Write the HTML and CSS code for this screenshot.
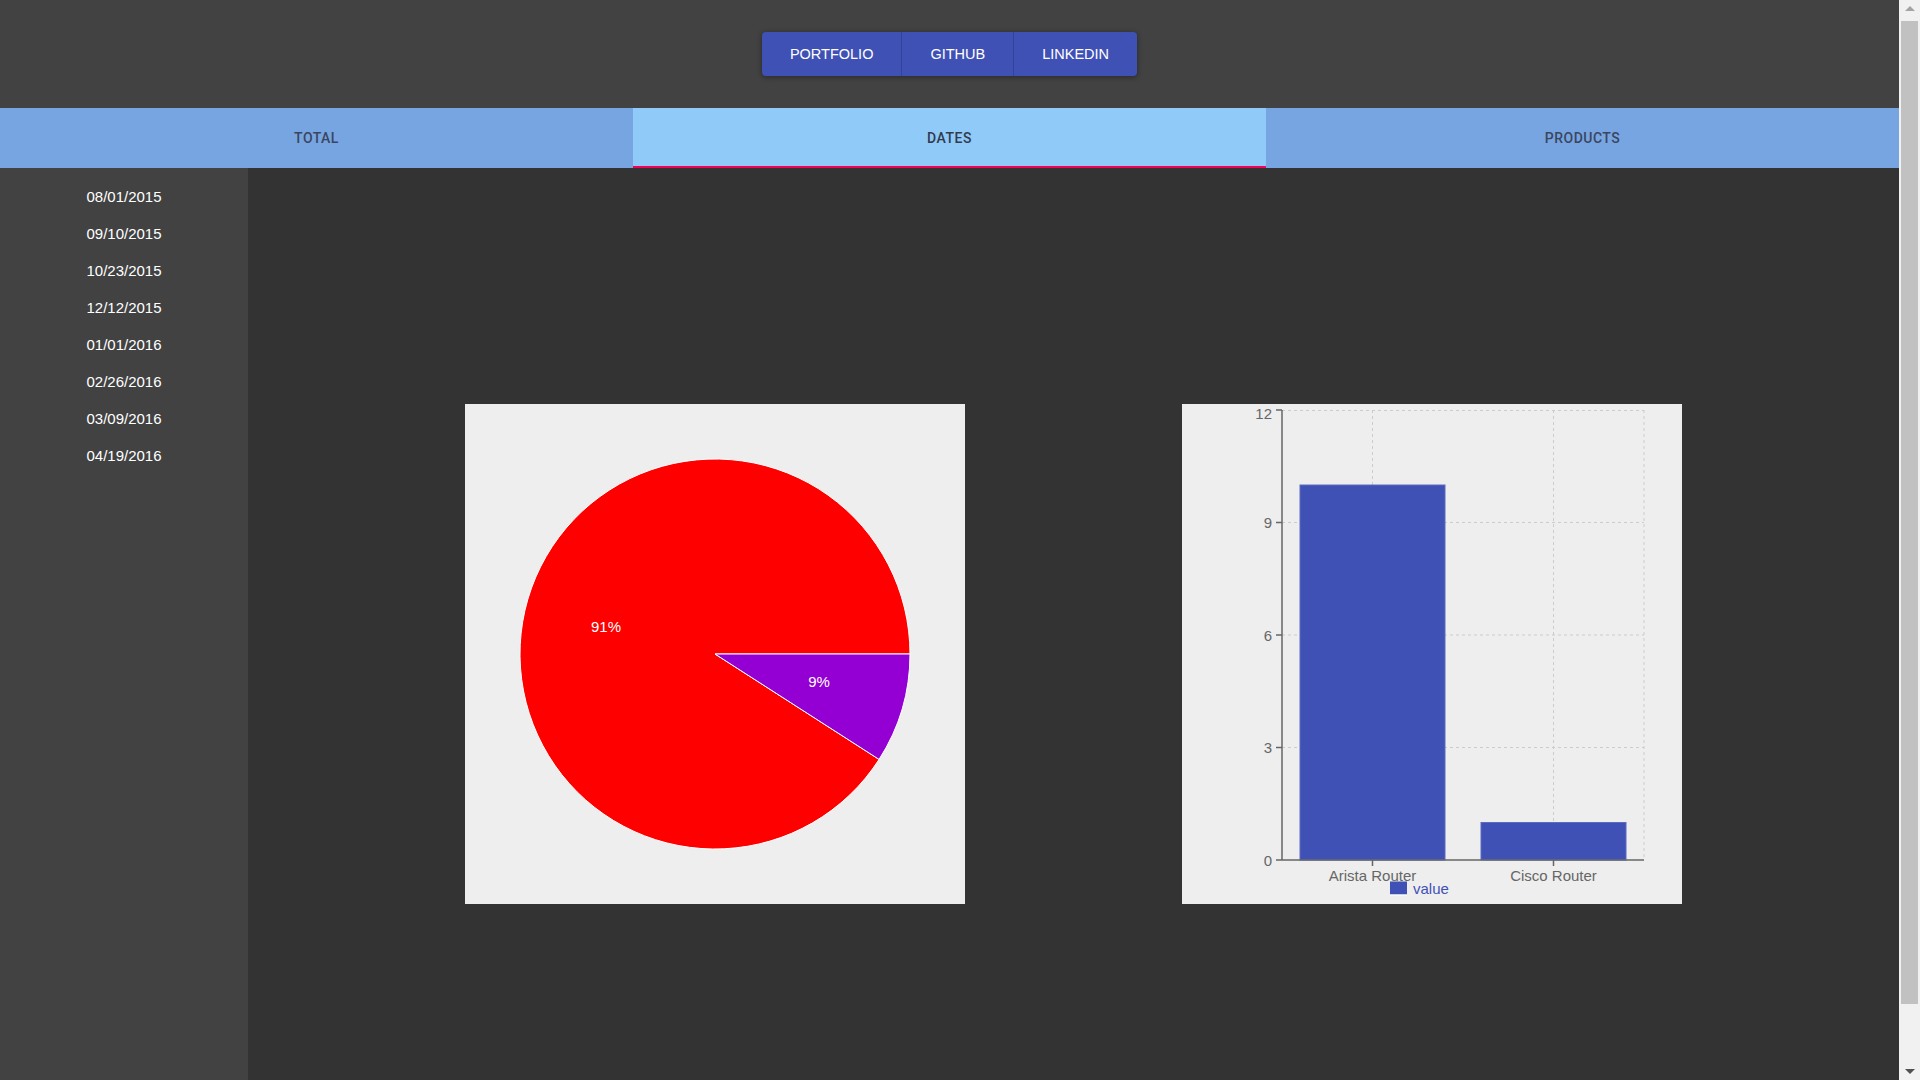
FILE: index.html
```html
<!DOCTYPE html>
<html lang="en">
<head>
<meta charset="utf-8">
<title>Dashboard</title>
<link rel="stylesheet" href="styles.css">
</head>
<body>
<div class="window">
  <div class="app">
    <header class="header">
      <nav class="btn-group">
        <a class="btn">PORTFOLIO</a>
        <a class="btn">GITHUB</a>
        <a class="btn">LINKEDIN</a>
      </nav>
    </header>
    <div class="tabs">
      <div class="tab">TOTAL</div>
      <div class="tab tab-active">DATES</div>
      <div class="tab">PRODUCTS</div>
    </div>
    <div class="content">
      <aside class="sidebar">
        <ul class="dates">
          <li>08/01/2015</li>
          <li>09/10/2015</li>
          <li>10/23/2015</li>
          <li>12/12/2015</li>
          <li>01/01/2016</li>
          <li>02/26/2016</li>
          <li>03/09/2016</li>
          <li>04/19/2016</li>
        </ul>
      </aside>
      <main class="charts">
        <div class="chart-card">
          <svg class="chart" width="500" height="500" viewBox="0 0 500 500">
            <path d="M250,250 L414.05,355.42 A195,195 0 1 1 445,250 Z" fill="#ff0000" stroke="#ffffff" stroke-width="1"/>
            <path d="M250,250 L445,250 A195,195 0 0 1 414.05,355.42 Z" fill="#9400d3" stroke="#ffffff" stroke-width="1"/>
            <text class="pie-label" x="141" y="222.5">91%</text>
            <text class="pie-label" x="354" y="277.5">9%</text>
          </svg>
        </div>
        <div class="chart-card">
          <svg class="chart" width="500" height="500" viewBox="0 0 500 500">
            <g class="grid">
              <line x1="100" y1="6.5" x2="462" y2="6.5"/>
              <line x1="100" y1="118.5" x2="462" y2="118.5"/>
              <line x1="100" y1="231" x2="462" y2="231"/>
              <line x1="100" y1="343.5" x2="462" y2="343.5"/>
              <line x1="190.5" y1="6" x2="190.5" y2="456"/>
              <line x1="371.5" y1="6" x2="371.5" y2="456"/>
              <line x1="462" y1="6" x2="462" y2="456"/>
            </g>
            <rect class="bar" x="118" y="81" width="145" height="375"/>
            <rect class="bar" x="299" y="418.5" width="145" height="37.5"/>
            <g class="axis">
              <line x1="100" y1="6" x2="100" y2="456"/>
              <line x1="94" y1="6" x2="100" y2="6"/>
              <line x1="94" y1="118.5" x2="100" y2="118.5"/>
              <line x1="94" y1="231" x2="100" y2="231"/>
              <line x1="94" y1="343.5" x2="100" y2="343.5"/>
              <line x1="94" y1="456" x2="100" y2="456"/>
              <line x1="100" y1="456" x2="462" y2="456"/>
              <line x1="190.5" y1="456" x2="190.5" y2="462"/>
              <line x1="371.5" y1="456" x2="371.5" y2="462"/>
            </g>
            <g class="tick-y">
              <text x="90" y="9.5">12</text>
              <text x="90" y="118.5">9</text>
              <text x="90" y="231">6</text>
              <text x="90" y="343.5">3</text>
              <text x="90" y="456">0</text>
            </g>
            <g class="tick-x">
              <text x="190.5" y="471">Arista Router</text>
              <text x="371.5" y="471">Cisco Router</text>
            </g>
            <rect class="legend-icon" x="208" y="477.5" width="17" height="13"/>
            <line class="legend-line" x1="208" y1="491" x2="225" y2="491"/>
            <text class="legend-text" x="231" y="484">value</text>
          </svg>
        </div>
      </main>
    </div>
  </div>
  <div class="scrollbar">
    <div class="sb-btn"><span class="arrow-up"></span></div>
    <div class="sb-track"><div class="sb-thumb"></div></div>
    <div class="sb-btn"><span class="arrow-down"></span></div>
  </div>
</div>
</body>
</html>
```

FILE: styles.css
```css
* {
  box-sizing: border-box;
}

html, body {
  margin: 0;
  padding: 0;
  height: 100%;
  overflow: hidden;
}

body {
  font-family: "Liberation Sans", Arial, sans-serif;
  background: #333333;
}

.window {
  display: flex;
  height: 100vh;
}

.app {
  flex: 1;
  display: flex;
  flex-direction: column;
  min-width: 0;
}

/* Header */
.header {
  height: 108px;
  background: #424242;
  display: flex;
  justify-content: center;
  align-items: flex-start;
  padding-top: 32px;
}

.btn-group {
  display: flex;
  height: 44px;
  background: #3f51b5;
  border-radius: 4px;
  box-shadow: 0 1px 6px rgba(0, 0, 0, 0.2), 0 1px 4px rgba(0, 0, 0, 0.2);
  overflow: hidden;
}

.btn {
  display: flex;
  align-items: center;
  padding: 0 28px;
  color: #ffffff;
  font-size: 14.5px;
  cursor: pointer;
}

.btn + .btn {
  border-left: 1px solid #34449c;
}

/* Tabs */
.tabs {
  display: flex;
  height: 60px;
  background: #77a5e2;
}

.tab {
  flex: 1;
  display: flex;
  align-items: center;
  justify-content: center;
  font-family: Roboto, "Liberation Sans", sans-serif;
  font-weight: 500;
  font-size: 14px;
  letter-spacing: 0.5px;
  color: #3a4660;
}

.tab-active {
  background: #90caf9;
  color: #323b4c;
  box-shadow: inset 0 -2px 0 #f50057;
}

/* Content */
.content {
  flex: 1;
  display: flex;
  min-height: 0;
}

.sidebar {
  width: 248px;
  flex-shrink: 0;
  background: #424242;
}

.dates {
  list-style: none;
  margin: 0;
  padding: 10px 0 0;
}

.dates li {
  height: 37px;
  display: flex;
  align-items: center;
  justify-content: center;
  color: #ffffff;
  font-size: 15px;
}

.charts {
  flex: 1;
  background: #333333;
  display: flex;
  justify-content: space-evenly;
  align-items: flex-start;
  padding-top: 236px;
}

.chart-card {
  width: 500px;
  height: 500px;
  background: #eeeeee;
}

.chart {
  display: block;
  font-family: "Liberation Sans", Arial, sans-serif;
}

.pie-label {
  fill: #ffffff;
  font-size: 15px;
  text-anchor: middle;
  dominant-baseline: central;
}

.grid line {
  stroke: #cccccc;
  stroke-width: 1;
  stroke-dasharray: 3 3;
}

.bar {
  fill: #3f51b5;
  stroke: #5c6bc0;
  stroke-width: 1;
}

.axis line {
  stroke: #666666;
  stroke-width: 1.5;
}

.tick-y text {
  fill: #666666;
  font-size: 15px;
  text-anchor: end;
  dominant-baseline: central;
}

.tick-x text {
  fill: #666666;
  font-size: 15px;
  text-anchor: middle;
  dominant-baseline: central;
}

.legend-icon {
  fill: #3f51b5;
}

.legend-line {
  stroke: #ffffff;
  stroke-width: 1;
}

.legend-text {
  fill: #3f51b5;
  font-size: 15px;
  dominant-baseline: central;
}

/* Scrollbar */
.scrollbar {
  width: 21px;
  flex-shrink: 0;
  background: #f1f1f1;
  display: flex;
  flex-direction: column;
}

.sb-btn {
  height: 17px;
  display: flex;
  align-items: center;
  justify-content: center;
}

.arrow-up {
  width: 0;
  height: 0;
  border-left: 5px solid transparent;
  border-right: 5px solid transparent;
  border-bottom: 5px solid #a3a3a3;
}

.arrow-down {
  width: 0;
  height: 0;
  border-left: 5px solid transparent;
  border-right: 5px solid transparent;
  border-top: 5px solid #505050;
}

.sb-track {
  flex: 1;
  padding: 4px 2px;
}

.sb-thumb {
  height: 983px;
  background: #c1c1c1;
}
```
